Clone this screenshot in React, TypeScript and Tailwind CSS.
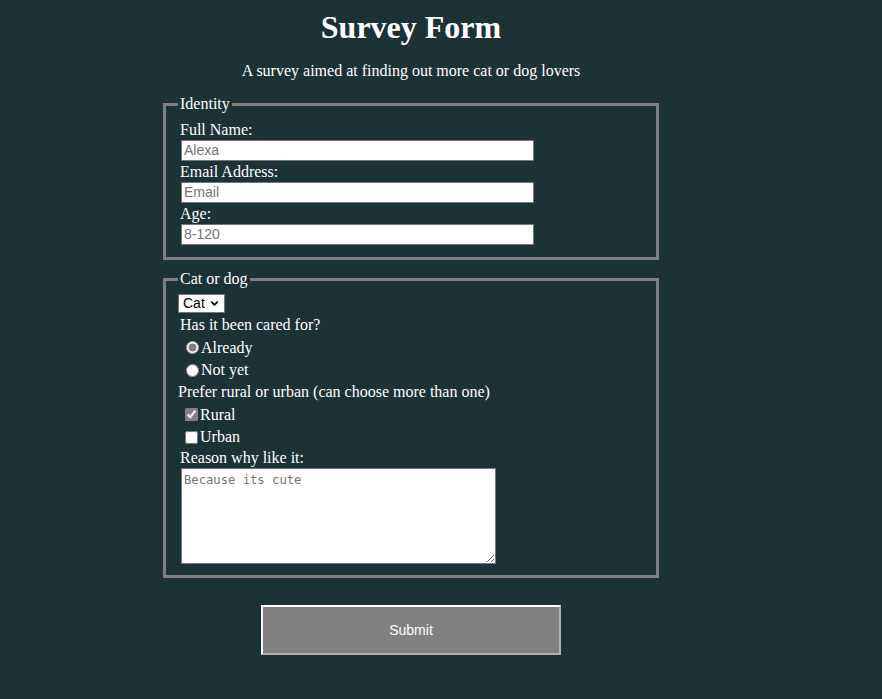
import { useState } from 'react'
import { ChevronDown } from 'lucide-react'

const labelRow = 'h-[21px] leading-[21px] pl-[2px]'
const textInput =
  "block ml-[3px] w-[353px] h-[21px] px-[2px] py-[1px] bg-white text-black border border-[#767676] font-['Liberation_Sans',Arial,sans-serif] text-[14px] placeholder:text-[#757575] focus:outline-none"

export default function App() {
  const [pet, setPet] = useState('cat')
  const [cared, setCared] = useState('already')
  const [rural, setRural] = useState(true)
  const [urban, setUrban] = useState(false)

  return (
    <div className="min-h-screen w-full bg-[#1b3335] text-white font-['Liberation_Serif','Times_New_Roman',serif] text-[16px]">
      <div className="w-[822px]">
        <h1 className="pt-[9px] text-center text-[32px] font-bold leading-[37px]">Survey Form</h1>
        <p className="mt-[16px] text-center leading-[18px]">
          A survey aimed at finding out more cat or dog lovers
        </p>

        <form onSubmit={e => e.preventDefault()}>
          {/* Identity */}
          <fieldset className="mx-auto mt-[15px] w-[496px] border-[3px] border-[#808080] px-[12px] pt-[6px] pb-[12px]">
            <legend className="px-[2px] leading-[18px]">Identity</legend>
            <div className={labelRow}>
              <label htmlFor="name">Full Name:</label>
            </div>
            <input id="name" type="text" placeholder="Alexa" className={textInput} />
            <div className={labelRow}>
              <label htmlFor="email">Email Address:</label>
            </div>
            <input id="email" type="email" placeholder="Email" className={textInput} />
            <div className={labelRow}>
              <label htmlFor="age">Age:</label>
            </div>
            <input id="age" type="number" placeholder="8-120" className={textInput} />
          </fieldset>

          {/* Cat or dog */}
          <fieldset className="mx-auto mt-[10px] w-[496px] border-[3px] border-[#808080] px-[12px] pt-[6px] pb-[11px]">
            <legend className="px-[2px] leading-[18px]">Cat or dog</legend>
            <div className="relative h-[19px] w-[47px]">
              <select
                value={pet}
                onChange={e => setPet(e.target.value)}
                className="block h-[19px] w-[47px] appearance-none bg-white text-black border border-[#767676] pl-[4px] font-['Liberation_Sans',Arial,sans-serif] text-[14px] leading-[17px] focus:outline-none"
              >
                <option value="cat">Cat</option>
                <option value="dog">Dog</option>
              </select>
              <ChevronDown
                size={11}
                strokeWidth={3.5}
                className="pointer-events-none absolute right-[5px] top-[4px] text-black"
              />
            </div>

            <div className="h-[23px] leading-[23px] pl-[2px]">Has it been cared for?</div>
            <label className="flex h-[23px] items-center pl-[3px]">
              <input
                type="radio"
                name="cared"
                checked={cared === 'already'}
                onChange={() => setCared('already')}
                className="ml-[5px] mr-[2px] h-[13px] w-[13px] accent-[#808080]"
              />
              <span className="leading-[18px]">Already</span>
            </label>
            <label className="flex h-[22px] items-center pl-[3px]">
              <input
                type="radio"
                name="cared"
                checked={cared === 'notyet'}
                onChange={() => setCared('notyet')}
                className="ml-[5px] mr-[2px] h-[13px] w-[13px] accent-[#808080]"
              />
              <span className="leading-[18px]">Not yet</span>
            </label>

            <div className="h-[22px] leading-[22px]">Prefer rural or urban (can choose more than one)</div>
            <label className="flex h-[23px] items-center pl-[3px]">
              <input
                type="checkbox"
                checked={rural}
                onChange={e => setRural(e.target.checked)}
                className="ml-[4px] mr-[2px] h-[13px] w-[13px] accent-[#808080]"
              />
              <span className="leading-[18px]">Rural</span>
            </label>
            <label className="flex h-[22px] items-center pl-[3px]">
              <input
                type="checkbox"
                checked={urban}
                onChange={e => setUrban(e.target.checked)}
                className="ml-[4px] mr-[2px] h-[13px] w-[13px] accent-[#808080]"
              />
              <span className="leading-[18px]">Urban</span>
            </label>

            <div className="h-[20px] leading-[20px] pl-[2px]">
              <label htmlFor="reason">Reason why like it:</label>
            </div>
            <textarea
              id="reason"
              placeholder="Because its cute"
              className="block ml-[3px] h-[96px] w-[315px] resize bg-white text-black border border-[#767676] px-[2px] pt-[2px] font-['DejaVu_Sans_Mono',monospace] text-[12.2px] placeholder:text-[#757575] focus:outline-none"
            />
          </fieldset>

          <button
            type="submit"
            className="mx-auto mt-[27px] block h-[50px] w-[300px] bg-[#808080] border-2 border-t-white border-l-white border-r-[#b0b0b0] border-b-[#b0b0b0] font-['Liberation_Sans',Arial,sans-serif] text-[14px] text-white"
          >
            Submit
          </button>
        </form>
      </div>
    </div>
  )
}
